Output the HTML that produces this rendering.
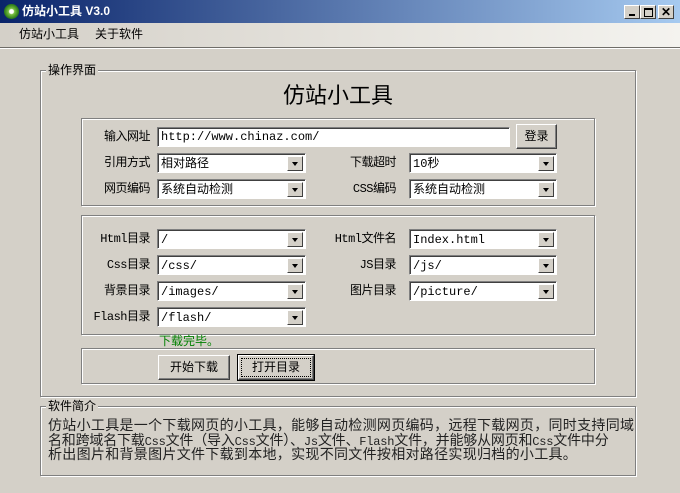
<!DOCTYPE html>
<html><head><meta charset="utf-8"><style>
*{margin:0;padding:0;box-sizing:border-box}
body{width:680px;height:493px;background:#d4d0c8;font-family:"Liberation Sans","WenQuanYi Zen Hei","Noto Sans CJK SC",sans-serif;font-size:12px;color:#000;position:relative;overflow:hidden}
.a{position:absolute}
.title{left:0;top:0;width:680px;height:23px;background:linear-gradient(90deg,#0a246a,#a6caf0);color:#fff;font-weight:bold;font-size:12px;line-height:23px;padding-left:22px}
.menu{left:0;top:23px;width:680px;height:24px;background:linear-gradient(90deg,#d4d0c8,#f4f3ef);line-height:22px}
.sep{left:0;top:47px;width:680px;height:2px;border-top:1px solid #6f6d68;border-bottom:1px solid #fff}
.grp{border:1px solid #808080;box-shadow:1px 1px 0 #fff inset,1px 1px 0 #fff}
.leg{background:#d4d0c8;padding:0 2px;line-height:13px}
.in{background:#fff;border:1px solid;border-color:#808080 #fff #fff #808080;box-shadow:inset 1px 1px 0 #404040;height:20px;line-height:19px;padding-left:3px;font-family:"Liberation Mono","WenQuanYi Zen Hei",monospace;font-size:12px}
.cb{background:#fff;border:1px solid;border-color:#808080 #fff #fff #808080;box-shadow:inset 1px 1px 0 #404040;height:20px;line-height:20px;padding-left:3px;font-size:12px;font-family:"Liberation Mono","WenQuanYi Zen Hei",monospace}
.cb i{position:absolute;right:2px;top:2px;width:16px;height:15px;background:#d4d0c8;border:1px solid;border-color:#fff #404040 #404040 #fff}
.cb i:after{content:"";position:absolute;left:4px;top:5px;border-left:3.5px solid transparent;border-right:3.5px solid transparent;border-top:4px solid #000}
.lb{text-align:right;width:80px;line-height:20px;font-family:"Liberation Mono","WenQuanYi Zen Hei",monospace;font-size:12px;letter-spacing:-0.5px}
.btn{background:#d4d0c8;border:1px solid;border-color:#fff #404040 #404040 #fff;box-shadow:inset -1px -1px 0 #808080;text-align:center}
.wb{top:5px;width:16px;height:14px;background:#d4d0c8;border:1px solid;border-color:#fff #404040 #404040 #fff;font-size:11px;line-height:12px;text-align:center;color:#000;font-weight:bold}
</style></head><body>
<div class="a title">仿站小工具 V3.0</div>
<div class="a" style="left:4px;top:4px;width:15px;height:15px;border-radius:50%;background:radial-gradient(circle at 50% 50%,#fff 0 2px,#7bc043 3px,#2e7d1a 7px)"></div>
<div class="a wb" style="left:624px"><span style="display:block;margin:8px 4px 0;height:2px;background:#000;width:6px"></span></div>
<div class="a wb" style="left:640px"><span style="display:block;margin:2px 3px;height:9px;border:1px solid #000;border-top-width:2px;width:9px"></span></div>
<div class="a wb" style="left:658px;font-size:12px">✕</div>
<div class="a menu"><span class="a" style="left:19px">仿站小工具</span><span class="a" style="left:95px">关于软件</span></div>
<div class="a sep"></div>

<div class="a grp" style="left:40px;top:70px;width:596px;height:327px"></div>
<div class="a leg" style="left:46px;top:64px">操作界面</div>
<div class="a" style="left:40px;top:83px;width:596px;text-align:center;font-size:22px;line-height:26px">仿站小工具</div>

<div class="a grp" style="left:81px;top:118px;width:514px;height:88px"></div>
<div class="a lb" style="left:70px;top:127px">输入网址</div>
<div class="a in" style="left:157px;top:127px;width:353px">http://www.chinaz.com/</div>
<div class="a btn" style="left:516px;top:124px;width:41px;height:25px;line-height:22px">登录</div>
<div class="a lb" style="left:70px;top:153px">引用方式</div>
<div class="a cb" style="left:157px;top:153px;width:149px">相对路径<i></i></div>
<div class="a lb" style="left:316px;top:153px">下载超时</div>
<div class="a cb" style="left:409px;top:153px;width:148px">10秒<i></i></div>
<div class="a lb" style="left:70px;top:179px">网页编码</div>
<div class="a cb" style="left:157px;top:179px;width:149px">系统自动检测<i></i></div>
<div class="a lb" style="left:316px;top:179px">CSS编码</div>
<div class="a cb" style="left:409px;top:179px;width:148px">系统自动检测<i></i></div>

<div class="a grp" style="left:81px;top:215px;width:514px;height:120px"></div>
<div class="a lb" style="left:70px;top:229px">Html目录</div>
<div class="a cb" style="left:157px;top:229px;width:149px">/<i></i></div>
<div class="a lb" style="left:316px;top:229px">Html文件名</div>
<div class="a cb" style="left:409px;top:229px;width:148px">Index.html<i></i></div>
<div class="a lb" style="left:70px;top:255px">Css目录</div>
<div class="a cb" style="left:157px;top:255px;width:149px">/css/<i></i></div>
<div class="a lb" style="left:316px;top:255px">JS目录</div>
<div class="a cb" style="left:409px;top:255px;width:148px">/js/<i></i></div>
<div class="a lb" style="left:70px;top:281px">背景目录</div>
<div class="a cb" style="left:157px;top:281px;width:149px">/images/<i></i></div>
<div class="a lb" style="left:316px;top:281px">图片目录</div>
<div class="a cb" style="left:409px;top:281px;width:148px">/picture/<i></i></div>
<div class="a lb" style="left:70px;top:307px">Flash目录</div>
<div class="a cb" style="left:157px;top:307px;width:149px">/flash/<i></i></div>

<div class="a" style="left:159px;top:334px;color:#008000;line-height:14px">下载完毕。</div>
<div class="a grp" style="left:81px;top:348px;width:514px;height:36px"></div>
<div class="a btn" style="left:158px;top:355px;width:72px;height:25px;line-height:22px">开始下载</div>
<div class="a btn" style="left:238px;top:355px;width:76px;height:25px;line-height:22px;outline:1px solid #000"><span style="display:block;margin:2px;border:1px dotted #000;line-height:17px">打开目录</span></div>

<div class="a grp" style="left:40px;top:406px;width:596px;height:70px"></div>
<div class="a leg" style="left:46px;top:400px">软件简介</div>
<div class="a" style="left:48px;top:420px;width:590px;font-family:'Liberation Mono','WenQuanYi Zen Hei',monospace;font-size:14px;line-height:14.5px;letter-spacing:0.3px;color:#222;white-space:nowrap">仿站小工具是一个下载网页的小工具，能够自动检测网页编码，远程下载网页，同时支持同域<br><span style="letter-spacing:-0.2px">名和跨域名下载<span style="font-size:12px">Css</span>文件（导入<span style="font-size:12px">Css</span>文件）、<span style="font-size:12px">Js</span>文件、<span style="font-size:12px">Flash</span>文件，并能够从网页和<span style="font-size:12px">Css</span>文件中分</span><br>析出图片和背景图片文件下载到本地，实现不同文件按相对路径实现归档的小工具。</div>
</body></html>
